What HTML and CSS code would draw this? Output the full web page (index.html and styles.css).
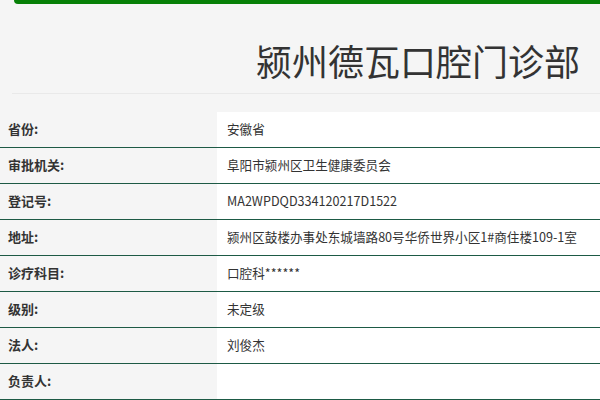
FILE: index.html
```html
<!DOCTYPE html>
<html lang="zh-CN">
<head>
<meta charset="utf-8">
<link rel="stylesheet" href="styles.css">
</head>
<body>
<div class="topbar"></div>
<div class="header"><h1 class="title">颍州德瓦口腔门诊部</h1></div>
<div class="info">
  <div class="row"><div class="label">省份:</div><div class="value">安徽省</div></div>
  <div class="row"><div class="label">审批机关:</div><div class="value">阜阳市颍州区卫生健康委员会</div></div>
  <div class="row"><div class="label">登记号:</div><div class="value">MA2WPDQD334120217D1522</div></div>
  <div class="row"><div class="label">地址:</div><div class="value">颍州区鼓楼办事处东城墙路80号华侨世界小区1#商住楼109-1室</div></div>
  <div class="row"><div class="label">诊疗科目:</div><div class="value">口腔科******</div></div>
  <div class="row"><div class="label">级别:</div><div class="value">未定级</div></div>
  <div class="row"><div class="label">法人:</div><div class="value">刘俊杰</div></div>
  <div class="row"><div class="label">负责人:</div><div class="value"></div></div>
</div>
</body>
</html>
```
FILE: styles.css
```css
html, body {
  margin: 0;
  padding: 0;
  background: #f5f5f5;
  font-family: "Noto Sans CJK SC", "Noto Sans", sans-serif;
  color: #333;
  overflow: hidden;
}
.topbar {
  height: 4px;
  margin-left: 14px;
  background: #078007;
  border-bottom-left-radius: 4px;
}
.header {
  margin-left: 12px;
  padding: 36px 20px 13px 0;
  border-bottom: 1px solid #e9e9e9;
  text-align: right;
}
.title {
  margin: 0;
  font-size: 36px;
  line-height: 40px;
  font-weight: normal;
  color: #333;
}
.info {
  margin-top: 18px;
}
.row {
  display: grid;
  grid-template-columns: 217px 1fr;
  height: 35px;
  border-bottom: 1px solid #1d5a45;
}
.label {
  background: #f5f5f5;
  padding-left: 8px;
  font-size: 13px;
  font-weight: bold;
  line-height: 34px;
  color: #333;
}
.value {
  background: #fff;
  padding-left: 10px;
  font-size: 12.6px;
  line-height: 34px;
  color: #333;
  white-space: nowrap;
}
```
